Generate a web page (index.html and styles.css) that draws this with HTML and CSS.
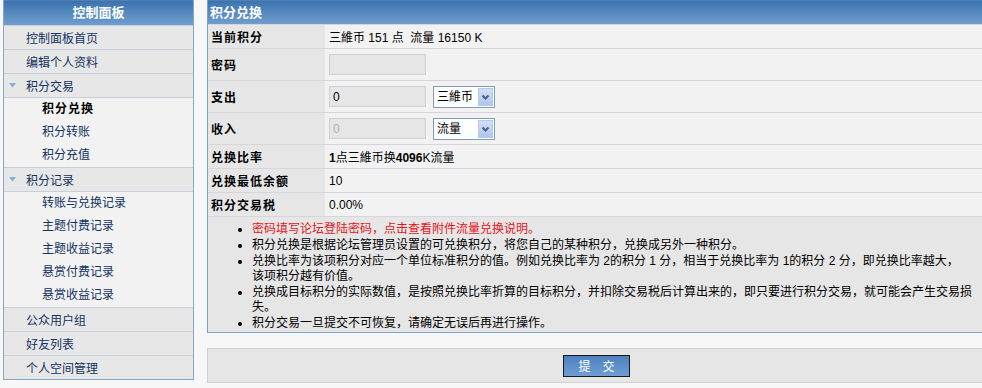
FILE: index.html
```html
<!DOCTYPE html>
<html lang="zh-CN">
<head>
    <meta charset="UTF-8">
    <title>积分兑换</title>
    <link rel="stylesheet" href="styles.css">
</head>
<body>
    <div class="page">
        <div class="sidebar">
            <div class="side-head">控制面板</div>
            <a class="side-item" href="#">控制面板首页</a>
            <a class="side-item" href="#">编辑个人资料</a>
            <a class="side-item open" href="#">
                <svg class="tri" viewBox="0 0 7 5"><path d="M0 0 L7 0 L3.5 4.5 Z" fill="#7fb0d8"/></svg>积分交易
            </a>
            <ul class="side-sub">
                <li class="current">积分兑换</li>
                <li>积分转账</li>
                <li>积分充值</li>
            </ul>
            <a class="side-item open" href="#">
                <svg class="tri" viewBox="0 0 7 5"><path d="M0 0 L7 0 L3.5 4.5 Z" fill="#7fb0d8"/></svg>积分记录
            </a>
            <ul class="side-sub">
                <li>转账与兑换记录</li>
                <li>主题付费记录</li>
                <li>主题收益记录</li>
                <li>悬赏付费记录</li>
                <li>悬赏收益记录</li>
            </ul>
            <a class="side-item" href="#">公众用户组</a>
            <a class="side-item" href="#">好友列表</a>
            <a class="side-item" href="#">个人空间管理</a>
        </div>

        <div class="main">
            <div class="panel">
                <div class="panel-head">积分兑换</div>

                <div class="form-row">
                    <div class="label">当前积分</div>
                    <div class="value"><span>三維币 151 点&nbsp; 流量 16150 K</span></div>
                </div>
                <div class="form-row tall">
                    <div class="label">密码</div>
                    <div class="value"><input class="text-input" type="password"></div>
                </div>
                <div class="form-row tall">
                    <div class="label">支出</div>
                    <div class="value">
                        <input class="text-input" type="text" value="0">
                        <span class="select">
                            <select><option>三維币</option><option>流量</option></select>
                            <span class="arrow"><svg viewBox="0 0 13 16"><path d="M3.5 6.5 L6.5 9.5 L9.5 6.5" fill="none" stroke="#4a5f86" stroke-width="2"/></svg></span>
                        </span>
                    </div>
                </div>
                <div class="form-row tall">
                    <div class="label">收入</div>
                    <div class="value">
                        <input class="text-input" type="text" value="0" disabled>
                        <span class="select">
                            <select><option>流量</option><option>三維币</option></select>
                            <span class="arrow"><svg viewBox="0 0 13 16"><path d="M3.5 6.5 L6.5 9.5 L9.5 6.5" fill="none" stroke="#4a5f86" stroke-width="2"/></svg></span>
                        </span>
                    </div>
                </div>
                <div class="form-row">
                    <div class="label">兑换比率</div>
                    <div class="value"><span><b>1</b>点三維币换<b>4096</b>K流量</span></div>
                </div>
                <div class="form-row">
                    <div class="label">兑换最低余额</div>
                    <div class="value"><span>10</span></div>
                </div>
                <div class="form-row">
                    <div class="label">积分交易税</div>
                    <div class="value"><span>0.00%</span></div>
                </div>

                <ul class="notes">
                    <li><span class="warn">密码填写论坛登陆密码，点击查看附件流量兑换说明。</span></li>
                    <li>积分兑换是根据论坛管理员设置的可兑换积分，将您自己的某种积分，兑换成另外一种积分。</li>
                    <li>兑换比率为该项积分对应一个单位标准积分的值。例如兑换比率为 2的积分 1 分，相当于兑换比率为 1的积分 2 分，即兑换比率越大，<br>该项积分越有价值。</li>
                    <li>兑换成目标积分的实际数值，是按照兑换比率折算的目标积分，并扣除交易税后计算出来的，即只要进行积分交易，就可能会产生交易损失。</li>
                    <li>积分交易一旦提交不可恢复，请确定无误后再进行操作。</li>
                </ul>
            </div>

            <div class="submit-bar">
                <button class="submit-btn" type="submit">提　交</button>
            </div>
        </div>
    </div>
</body>
</html>
```

FILE: styles.css
```css
body, html {
    margin: 0;
    padding: 0;
    background-color: #f7f7f7;
    font-family: "Liberation Sans", "Noto Sans CJK SC", sans-serif;
    font-size: 12px;
    color: #000;
    overflow: hidden;
}

.page {
    display: flex;
    align-items: flex-start;
    padding-left: 3px;
}

/* sidebar */

.sidebar {
    width: 191px;
    box-sizing: border-box;
    border: 1px solid #86a6c9;
    border-top: none;
    background-color: #e7e7e7;
}

.side-head {
    height: 24px;
    line-height: 24px;
    border-top: 1px solid #4f80ae;
    background: linear-gradient(#3b73b0, #709ecd);
    color: #fff;
    font-weight: bold;
    font-size: 13px;
    text-align: center;
}

.side-item {
    display: flex;
    align-items: center;
    height: 23px;
    border-top: 1px solid #c4d0de;
    padding-left: 22px;
    color: #13325f;
    text-decoration: none;
}

.side-item.open {
    padding-left: 5px;
}

.tri {
    width: 7px;
    height: 5px;
    margin-right: 10px;
}

.side-sub {
    list-style: none;
    margin: 0;
    padding: 0;
    border-top: 1px solid #c4d0de;
    background-color: #f2f2f2;
}

.side-sub li {
    height: 23px;
    line-height: 23px;
    padding-left: 38px;
    color: #13325f;
}

.side-sub li.current {
    font-weight: bold;
    color: #000;
    letter-spacing: 1px;
}

/* main panel */

.main {
    flex: 1;
    margin-left: 13px;
}

.panel {
    border-left: 1px solid #7fa3c8;
    border-bottom: 1px solid #7fa3c8;
    background-color: #f2f2f2;
}

.panel-head {
    height: 23px;
    line-height: 23px;
    border-top: 1px solid #4f80ae;
    background: linear-gradient(#3b73b0, #709ecd);
    color: #fff;
    font-weight: bold;
    font-size: 13px;
    padding-left: 2px;
}

.form-row {
    display: grid;
    grid-template-columns: 117px 1fr;
    border-top: 1px solid #d7d4de;
}

.form-row .label,
.form-row .value {
    display: flex;
    align-items: center;
    height: 23px;
}

.form-row.tall .label,
.form-row.tall .value {
    height: 31px;
}

.form-row .label {
    background-color: #e6e6e6;
    font-weight: bold;
    letter-spacing: 1px;
    padding-left: 3px;
}

.form-row .value {
    padding-left: 4px;
    gap: 7px;
}

.text-input {
    width: 97px;
    height: 21px;
    box-sizing: border-box;
    margin: 0;
    padding: 0 3px;
    border: 1px solid #cfcfcf;
    background-color: #e6e6e6;
    font-family: "Liberation Sans", sans-serif;
    font-size: 12px;
    color: #000;
}

.text-input:disabled {
    color: #b0b0b0;
}

.select {
    position: relative;
    display: inline-block;
    height: 22px;
}

.select select {
    appearance: none;
    -webkit-appearance: none;
    width: 62px;
    height: 22px;
    margin: 0;
    padding: 0 0 0 3px;
    border: 1px solid #7f9db9;
    border-radius: 0;
    background-color: #fff;
    font-family: "Liberation Sans", "Noto Sans CJK SC", sans-serif;
    font-size: 12px;
    color: #000;
}

.select .arrow {
    position: absolute;
    right: 2px;
    top: 2px;
    width: 13px;
    height: 16px;
    border: 1px solid #b8c8ea;
    background: linear-gradient(#d3e0f8, #b0c5ee);
    pointer-events: none;
}

.select .arrow svg {
    display: block;
    width: 13px;
    height: 16px;
}

.notes {
    margin: 0;
    height: 116px;
    box-sizing: border-box;
    padding: 5px 6px 0 44px;
    border-top: 1px solid #d7d4de;
    background-color: #e6e6e6;
    line-height: 15px;
}

.notes li {
    margin-bottom: 1px;
}

.notes .warn {
    color: #e3151c;
}

/* submit */

.submit-bar {
    margin-top: 15px;
    height: 33px;
    border: 1px solid #d0d0d0;
    border-right: none;
    background-color: #e6e6e6;
    display: flex;
    align-items: center;
    justify-content: center;
    padding-left: 3px;
}

.submit-btn {
    width: 67px;
    height: 22px;
    padding: 0;
    border: 1px solid #1a1a1a;
    background: linear-gradient(#4c81be, #6f9ed3);
    color: #fff;
    font-family: "Noto Sans CJK SC", sans-serif;
    font-size: 12px;
    cursor: pointer;
}
```
